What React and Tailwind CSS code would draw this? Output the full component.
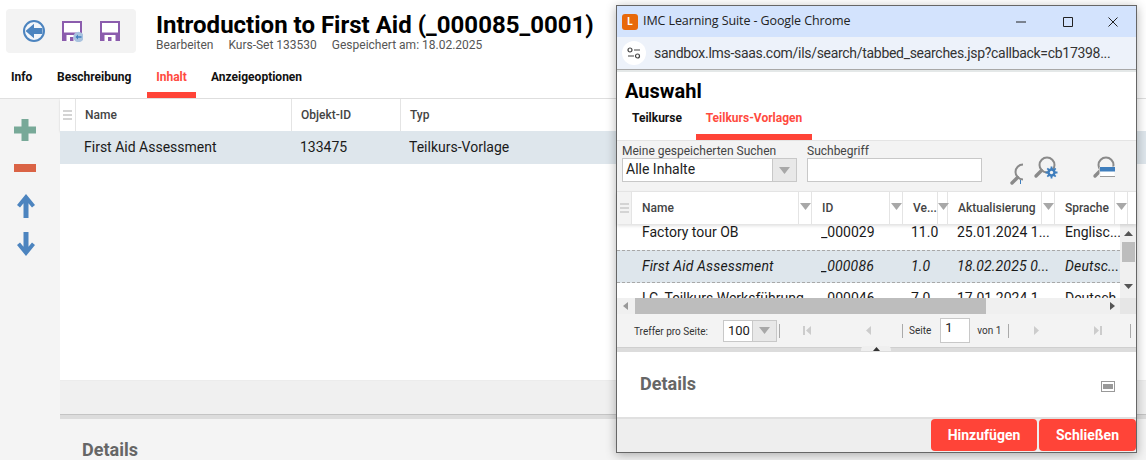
const Floppy = ({ small }) => (
  <svg width="22" height="22" viewBox="0 0 22 22" className="block">
    <path d="M1 1h20v20H1z" fill="#8b5cad" />
    <path d="M3 3h16v9.5H3z" fill="#fff" />
    <path d="M5.5 15h11v6h-11z" fill="#fff" />
    <path d="M9 17h3.5v4H9z" fill="#8b5cad" />
    {small && <circle cx="17.5" cy="17" r="5.2" fill="#a9c3df" />}
    {small && <path d="M14.5 17l2.5-2.4v1.6h3.5v1.6H17v1.6z" fill="#3f7ebd" />}
  </svg>
);

const Funnel = () => (
  <svg width="11" height="7" viewBox="0 0 11 7" className="block"><path d="M0 0h11L5.5 7z" fill="#a8a8a8" /></svg>
);

const Handle = () => (
  <div className="flex flex-col gap-[2px] w-[9px]">
    <div className="h-[2px] bg-[#d4d4d4]" /><div className="h-[2px] bg-[#d4d4d4]" /><div className="h-[2px] bg-[#d4d4d4]" />
  </div>
);

const Mag = ({ children }) => (
  <svg width="28" height="28" viewBox="0 0 28 28" className="block">
    <circle cx="15" cy="10" r="7.5" fill="none" stroke="#8a8a8a" strokeWidth="2" />
    <path d="M9.5 15.5L4 21" stroke="#8a8a8a" strokeWidth="3.4" strokeLinecap="round" />
    {children}
  </svg>
);

const cols = [
  ["Name", "w-[180px]"],
  ["ID", "w-[91px]"],
  ["Ve...", "w-[45px]"],
  ["Aktualisierung", "w-[107px]"],
  ["Sprache", "w-[73px]"],
];

const Row = ({ cells, sel }) => (
  <div className={"flex items-center h-[33px] shrink-0 text-[14px] text-[#1a1a1a] " + (sel ? "bg-[#dee6ec] italic tracking-[0.15px] border-y border-dashed border-[#a8a8a8]" : "pb-[2px]")}>
    <span className="w-[25px] shrink-0" />
    <span className="w-[179px] shrink-0 truncate">{cells[0]}</span>
    <span className="w-[90px] shrink-0 truncate">{cells[1]}</span>
    <span className="w-[46px] shrink-0">{cells[2]}</span>
    <span className="w-[108px] shrink-0 whitespace-nowrap">{cells[3]}</span>
    <span className="whitespace-nowrap">{cells[4]}</span>
  </div>
);

export default function App() {
  return (
    <div className="relative w-[1146px] h-[460px] overflow-hidden bg-white font-['Roboto',sans-serif]">
      <header className="h-[99px] border-b border-[#e0e0e0] flex flex-col">
        <div className="flex h-[65px] pl-[6px] pt-[9px]">
          <div className="w-[130px] h-[44px] bg-[#f3f3f3] rounded-[4px] flex items-center pl-[17px] gap-[16px]">
            <svg width="22" height="22" viewBox="0 0 22 22" className="block">
              <circle cx="11" cy="11" r="10" fill="#f3f6fa" stroke="#4c84bf" strokeWidth="2" />
              <path d="M2.5 11L11 3.8V8h8.5v6H11v4.2z" fill="#4c84bf" />
            </svg>
            <Floppy small />
            <Floppy />
          </div>
          <div className="ml-[20px] mt-[1px]">
            <h1 className="text-[24px] tracking-[0.01px] leading-[30px] font-bold text-black whitespace-nowrap">Introduction to First Aid (_000085_0001)</h1>
            <div className="flex gap-[15px] text-[12px] leading-[14px] text-[#555] mt-[-2px]">
              <span>Bearbeiten</span><span>Kurs-Set 133530</span><span>Gespeichert am: 18.02.2025</span>
            </div>
          </div>
        </div>
        <nav className="flex pl-[11px] text-[12px] font-bold text-[#111] h-[33px]">
          <span className="pt-[3px] w-[46px]">Info</span>
          <span className="pt-[3px] w-[90px]">Beschreibung</span>
          <span className="w-[49px] h-[33px] pt-[3px] text-center text-[#ff4a40] border-b-[6px] border-[#ff4438]">Inhalt</span>
          <span className="pt-[3px] ml-[15px]">Anzeigeoptionen</span>
        </nav>
      </header>

      <div className="flex h-[361px]">
        <aside className="w-[60px] bg-[#f4f4f4] shrink-0 flex flex-col pl-[14px] pt-[20px]">
          <svg width="22" height="22" viewBox="0 0 22 22" className="block"><path d="M7.5 0h7v7.5H22v7h-7.5V22h-7v-7.5H0v-7h7.5z" fill="#78a998" /></svg>
          <div className="w-[22px] h-[8px] bg-[#da6345] mt-[23px]" />
          <svg width="18" height="24" viewBox="0 0 18 24" className="block mt-[22px] ml-[3px]"><path d="M9 0l9 11-3 2.5-3.5-4.3V24h-5V9.2L3 13.500 0 11z" fill="#4c84bf" /></svg>
          <svg width="18" height="24" viewBox="0 0 18 24" className="block mt-[14px] ml-[3px]"><path d="M9 24L0 13l3-2.500 3.500 4.300V0h5v14.800l3.500-4.300 3 2.500z" fill="#4c84bf" /></svg>
        </aside>
        <main className="flex-1 flex flex-col">
          <div className="flex h-[32px] text-[12px] font-medium text-[#444] shadow-[0_1px_2px_rgba(0,0,0,0.15)]">
            <div className="w-[16px] flex items-center justify-center border-r border-[#e4e4e4] pr-[1px]"><Handle /></div>
            <div className="w-[216px] pl-[9px] flex items-center border-r border-[#e4e4e4]">Name</div>
            <div className="w-[109px] pl-[9px] flex items-center border-r border-[#e4e4e4]">Objekt-ID</div>
            <div className="flex-1 pl-[9px] flex items-center">Typ</div>
          </div>
          <div className="flex items-center h-[33px] bg-[#dee6ec] text-[14px] text-[#1a1a1a]">
            <span className="w-[240px] pl-[24px]">First Aid Assessment</span>
            <span className="w-[109px]">133475</span>
            <span>Teilkurs-Vorlage</span>
          </div>
          <div className="flex-1" />
          <div className="h-[34px] bg-[#f0f0f0] border-t border-[#ececec]" />
          <div className="h-[5px] bg-[#dcdcdc] border-t border-[#c4c4c4]" />
          <div className="h-[41px] bg-[#f4f4f4] pl-[22px] pt-[20px] text-[18px] leading-[22px] font-bold text-[#666]">Details</div>
        </main>
      </div>

      <section className="absolute left-[616px] top-[5px] w-[521px] h-[448px] flex flex-col bg-white border border-[#666] shadow-[0_2px_10px_rgba(0,0,0,0.3)]">
        <div className="h-[31px] bg-[#d3e3fd] flex items-center shrink-0 pl-[5px]">
          <div className="w-[16px] h-[16px] rounded-[3px] bg-[#e8690b] text-white text-[10px] font-bold flex items-center justify-center">L</div>
          <span className="ml-[5px] text-[12.5px] text-[#222] font-['Open_Sans',sans-serif] whitespace-nowrap tracking-[-0.1px]">IMC Learning Suite - Google Chrome</span>
          <svg width="120" height="14" viewBox="0 0 120 14" className="block ml-auto">
            <path d="M0 7h10" stroke="#222" strokeWidth="1" />
            <path d="M47.500 2.500h9v9h-9z" fill="none" stroke="#222" strokeWidth="1" />
            <path d="M92.500 2.500l9 9M101.500 2.500l-9 9" stroke="#222" strokeWidth="1" />
          </svg>
        </div>
        <div className="h-[33px] bg-[#edf2fa] flex items-center shrink-0 pl-[5px] border-b border-[#a8a8a8]">
          <div className="w-[24px] h-[24px] rounded-full bg-white flex items-center justify-center">
            <svg width="14" height="12" viewBox="0 0 14 12" className="block">
              <circle cx="3" cy="3" r="2" fill="none" stroke="#444" strokeWidth="1.2" />
              <path d="M7 3h6M1 9h6" stroke="#444" strokeWidth="1.2" />
              <circle cx="10.5" cy="9" r="2" fill="none" stroke="#444" strokeWidth="1.2" />
            </svg>
          </div>
          <span className="ml-[8px] text-[14px] tracking-[-0.3px] text-[#333] whitespace-nowrap">sandbox.lms-saas.com/ils/search/tabbed_searches.jsp?callback=cb17398...</span>
        </div>
        <div className="h-[2px] bg-[#e4e8e8] shrink-0" />
        <div className="h-[68px] shrink-0 flex flex-col">
          <div className="pl-[8px] pt-[5px] text-[20px] leading-[28px] font-bold text-black">Auswahl</div>
          <div className="flex text-[12px] font-bold">
            <span className="w-[79px] pl-[15px] pt-[4px] text-[#111]">Teilkurse</span>
            <span className="w-[116px] h-[35px] pt-[4px] text-center text-[#ff4a40] border-b-[6px] border-[#ff4438] whitespace-nowrap">Teilkurs-Vorlagen</span>
          </div>
        </div>
        <div className="h-[51px] shrink-0 bg-[#f3f3f3] flex pl-[5px] pt-[3px] border-t border-[#e4e4e4]">
          <div className="w-[185px]">
            <div className="text-[12px] leading-[14px] text-[#444]">Meine gespeicherten Suchen</div>
            <div className="w-[175px] h-[24px] bg-white border border-[#c8c8c8] flex items-center">
              <span className="flex-1 pl-[3px] pb-[2px] text-[14px] text-[#222]">Alle Inhalte</span>
              <span className="w-[24px] h-full bg-[#e8e8e8] border-l border-[#c8c8c8] flex items-center justify-center"><Funnel /></span>
            </div>
          </div>
          <div className="w-[176px]">
            <div className="text-[12px] leading-[14px] text-[#444]">Suchbegriff</div>
            <div className="w-[175px] h-[24px] bg-white border border-[#c8c8c8]" />
          </div>
          <div className="pt-[18px] ml-[25px] w-[15px] h-[46px] overflow-hidden">
            <Mag>
              <path d="M12.500 18v4" stroke="#3f7ebd" strokeWidth="1" />
            </Mag>
          </div>
          <div className="pt-[11px] ml-[9px]">
            <Mag>
              <path d="M19.500 11.500v12M13.500 17.500h12M15.300 13.300l8.400 8.400M23.700 13.300l-8.400 8.400" stroke="#3f7ebd" strokeWidth="1.8" />
              <circle cx="19.500" cy="17.500" r="4.200" fill="#3f7ebd" />
              <circle cx="19.500" cy="17.500" r="1.700" fill="#f3f3f3" />
            </Mag>
          </div>
          <div className="pt-[11px] ml-[31px]">
            <Mag>
              <path d="M9 12h15v10H9z" fill="#fff" stroke="#f3f3f3" />
              <path d="M9 12h15v4.500H9z" fill="#3f7ebd" />
              <path d="M9 21.500h15" stroke="#9a9a9a" />
            </Mag>
          </div>
        </div>
        <div className="h-[33px] shrink-0 flex border-t border-[#e4e4e4] text-[12px] font-medium text-[#444] bg-white relative z-10 shadow-[0_2px_3px_rgba(0,0,0,0.12)]">
          <div className="w-[15px] shrink-0 bg-[#f3f3f3] border-r border-[#e4e4e4] flex items-center justify-center"><Handle /></div>
          {cols.map(([t, w]) => (
            <div key={t} className={"shrink-0 flex items-stretch border-r border-[#e4e4e4] " + w}>
              <span className="flex-1 pl-[10px] flex items-center whitespace-nowrap">{t}</span>
              <span className="w-[13px] border-l border-[#e4e4e4] flex justify-center pt-[11px]"><Funnel /></span>
            </div>
          ))}
          <div className="flex-1" />
        </div>
        <div className="h-[74px] shrink-0 flex overflow-hidden">
          <div className="w-[503px] overflow-hidden shrink-0 bg-white">
            <div className="-mt-[7px] flex flex-col">
              <Row cells={["Factory tour OB", "_000029", "11.0", "25.01.2024 1...", "Englisc..."]} />
              <Row sel cells={["First Aid Assessment", "_000086", "1.0", "18.02.2025 0...", "Deutsc..."]} />
              <Row cells={["LC_Teilkurs Werksführung", "_000046", "7.0", "17.01.2024 1...", "Deutsch"]} />
            </div>
          </div>
          <div className="flex-1 bg-[#f0f0f0] flex flex-col items-center">
            <svg width="9" height="5" viewBox="0 0 9 5" className="block mt-[7px]"><path d="M4.500 0L9 5H0z" fill="#555" /></svg>
            <div className="w-[13px] h-[20px] bg-[#bdbdbd] mt-[6px]" />
            <div className="flex-1" />
            <svg width="9" height="5" viewBox="0 0 9 5" className="block mb-[9px]"><path d="M4.500 5L9 0H0z" fill="#555" /></svg>
          </div>
        </div>
        <div className="h-[16px] shrink-0 flex items-center">
          <div className="w-[503px] h-full bg-[#f0f0f0] flex items-center">
            <svg width="5" height="8" viewBox="0 0 5 8" className="block ml-[6px]"><path d="M5 0v8L0 4z" fill="#999" /></svg>
            <div className="ml-[7px] w-[351px] h-full bg-[#bdbdbd]" />
            <div className="flex-1" />
            <svg width="5" height="8" viewBox="0 0 5 8" className="block mr-[5px]"><path d="M0 0v8l5-4z" fill="#555" /></svg>
          </div>
          <div className="flex-1 h-full bg-[#e6e6e6]" />
        </div>
        <div className="h-[33px] shrink-0 bg-[#f3f3f3] flex items-center text-[10px] text-[#333]">
          <span className="ml-[17px] w-[89px] pt-[2px] whitespace-nowrap">Treffer pro Seite:</span>
          <div className="w-[54px] h-[22px] bg-white border border-[#c8c8c8] flex items-center">
            <span className="flex-1 pl-[4px] text-[13px] leading-[16px] text-[#222]">100</span>
            <span className="w-[24px] h-full bg-[#e8e8e8] border-l border-[#c8c8c8] flex items-center justify-center"><Funnel /></span>
          </div>
          <span className="w-px h-[14px] bg-[#aaa] ml-[2px]" />
          <svg width="8" height="9" viewBox="0 0 8 9" className="block ml-[23px]"><path d="M0 0h2v9H0zM8 0v9L3 4.500z" fill="#ccc" /></svg>
          <svg width="5" height="9" viewBox="0 0 5 9" className="block ml-[55px]"><path d="M5 0v9L0 4.500z" fill="#ccc" /></svg>
          <span className="w-px h-[14px] bg-[#aaa] ml-[31px]" />
          <span className="ml-[6px]">Seite</span>
          <div className="ml-[9px] w-[30px] h-[25px] bg-white border border-[#c8c8c8] pl-[4px] text-[13px] leading-[18px] text-[#222]">1</div>
          <span className="ml-[7px]">von 1</span>
          <span className="w-px h-[14px] bg-[#aaa] ml-[7px]" />
          <svg width="5" height="9" viewBox="0 0 5 9" className="block ml-[25px]"><path d="M0 0v9l5-4.500z" fill="#ccc" /></svg>
          <svg width="8" height="9" viewBox="0 0 8 9" className="block ml-[55px]"><path d="M0 0v9l5-4.500zM6 0h2v9H6z" fill="#ccc" /></svg>
          <span className="w-px h-[14px] bg-[#aaa] ml-[28px]" />
        </div>
        <div className="h-[5px] shrink-0 bg-[#dcdcdc] border-t border-[#cfcfcf] relative">
          <div className="absolute left-[244px] -top-[2px] w-[30px] h-[5px] bg-[#efefef] rounded-t-[4px] flex justify-center pt-[1px]">
            <svg width="7" height="4" viewBox="0 0 7 4" className="block"><path d="M3.500 0L7 4H0z" fill="#333" /></svg>
          </div>
        </div>
        <div className="flex-1 flex items-start pl-[23px] pt-[21px] justify-between pr-[21px] bg-white">
          <span className="text-[18px] leading-[22px] font-bold text-[#666]">Details</span>
          <div className="mt-[8px] w-[14px] h-[11px] border border-[#999] flex items-center p-[1px]"><div className="w-full h-[5px] bg-[#999]" /></div>
        </div>
        <div className="h-[35px] shrink-0 bg-[#eee] border-t-2 border-[#e0e0e0] flex justify-end gap-[2px] text-[14px] font-bold text-white">
          <div className="w-[106px] h-[32px] bg-[#ff4438] rounded-[4px] flex items-center justify-center">Hinzufügen</div>
          <div className="w-[97px] h-[32px] bg-[#ff4438] rounded-[4px] flex items-center justify-center">Schließen</div>
        </div>
      </section>
    </div>
  );
}
